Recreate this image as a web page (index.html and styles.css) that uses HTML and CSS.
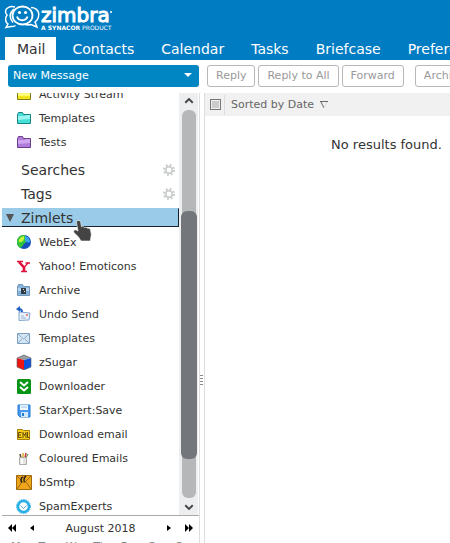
FILE: index.html
```html
<!DOCTYPE html>
<html lang="en">
<head>
    <meta charset="UTF-8">
    <meta name="viewport" content="width=device-width, initial-scale=1.0">
    <title>Zimbra: Mail</title>
    <link rel="stylesheet" href="styles.css">
</head>
<body>
    <header class="header">
        <a class="logo" href="#" aria-label="Zimbra, a Synacor product">
            <svg class="logo-face" width="36" height="25" viewBox="0 0 36 25" fill="none" stroke="#fff">
                <path d="M11 2C6 .5 2 3 1.500 6c-.2 1.500.5 3 1.500 4-2 3-2 7 1 9l-2 3.500 5-1c2 .3 3 0 4.500-1" stroke-width="1.500"/>
                <path d="M27 2.500c4 0 7 2.500 7.500 5 .8 4-1 7.500-3.500 9.500l2 5-6-2.500c-2 .5-4 .5-6 0" stroke-width="1.500"/>
                <path d="M10 4C5 8 5 13 9 17.500" stroke-width="1.500"/>
                <ellipse cx="18.500" cy="10.500" rx="10" ry="9" stroke-width="1.800"/>
                <path d="M13 11.500c1.500 5 9 5 10.500 0" stroke-width="1.800"/>
                <circle cx="15.500" cy="7.500" r="1.600" fill="#fff" stroke="none"/>
                <circle cx="21.500" cy="7.500" r="1.600" fill="#fff" stroke="none"/>
            </svg>
            <span class="logo-text">
                <span class="logo-name">zimbra<span class="logo-mark"></span></span>
                <span class="logo-tag"><b>A SYNACOR</b> PRODUCT</span>
            </span>
        </a>
        <nav class="tabs">
            <a class="tab active" href="#">Mail</a>
            <a class="tab" href="#">Contacts</a>
            <a class="tab" href="#">Calendar</a>
            <a class="tab" href="#">Tasks</a>
            <a class="tab" href="#">Briefcase</a>
            <a class="tab" href="#">Preferences</a>
        </nav>
    </header>

    <div class="toolbar">
        <button class="new-message">New Message <span class="arrow-down"></span></button>
        <div class="actions">
            <button class="button" disabled>Reply</button>
            <button class="button" disabled>Reply to All</button>
            <button class="button" disabled>Forward</button>
            <button class="button second-group" disabled>Archive</button>
        </div>
    </div>

    <div class="main">
        <aside class="sidebar">
            <div class="tree-wrap">
                <div class="tree">
                    <ul class="tree-list scrolled">
                        <li class="item">
                            <svg class="icon" viewBox="0 0 16 16"><path d="M1.500 4.500l1-2h4l1 2h7v9h-13z" fill="#eee51c" stroke="#827c12"/><path d="M2 7h12v3H2z" fill="#fffb76"/></svg>
                            <a href="#">Activity Stream</a>
                        </li>
                        <li class="item">
                            <svg class="icon" viewBox="0 0 16 16"><path d="M1.500 4.500l1-2h4l1 2h7v9h-13z" fill="#46dfd8" stroke="#17827f"/><path d="M2 6h7l1-1h4v4L2 10z" fill="#9bf4ef"/></svg>
                            <a href="#">Templates</a>
                        </li>
                        <li class="item">
                            <svg class="icon" viewBox="0 0 16 16"><path d="M1.500 4.500l1-2h4l1 2h7v9h-13z" fill="#b07bd8" stroke="#6a3d8c"/><path d="M2 6h7l1-1h4v4L2 10z" fill="#cfa5ee"/></svg>
                            <a href="#">Tests</a>
                        </li>
                    </ul>
                    <div class="section first">
                        <a href="#">Searches</a>
                        <button class="gear" aria-label="Searches options">
                            <svg width="12" height="12" viewBox="0 0 12 12" fill="none" stroke="#c6c9c9"><circle cx="6" cy="6" r="3.200" stroke-width="1.500"/><circle cx="6" cy="6" r="5" stroke-width="2" stroke-dasharray="1.900 2.027"/></svg>
                        </button>
                    </div>
                    <div class="section">
                        <a href="#">Tags</a>
                        <button class="gear" aria-label="Tags options">
                            <svg width="12" height="12" viewBox="0 0 12 12" fill="none" stroke="#c6c9c9"><circle cx="6" cy="6" r="3.200" stroke-width="1.500"/><circle cx="6" cy="6" r="5" stroke-width="2" stroke-dasharray="1.900 2.027"/></svg>
                        </button>
                    </div>
                    <div class="section selected">
                        <svg class="expander" width="8" height="8" viewBox="0 0 8 8"><path d="M0 0h8L4 8z" fill="#555"/></svg>
                        <a href="#">Zimlets</a>
                        <svg class="pointer" width="20" height="24" viewBox="0 0 20 24"><path d="M5 1.500c1.300-.3 2.500.5 2.700 1.700L8.500 8c1-.8 2.500-.6 3 .6 1-.7 2.500-.4 3 .7 1.300-.4 2.700.3 3 1.600l.8 4.600-1 6.500H8l-2.500-4L1 13.500c-1-1.700.5-3.200 2.200-2.500L5 12 3.500 4c-.2-1.200.3-2.200 1.500-2.500z" fill="#444" stroke="#fff" stroke-width=".6"/></svg>
                    </div>
                    <ul class="tree-list">
                        <li class="item">
                            <svg class="icon" viewBox="0 0 16 16"><circle cx="8" cy="8" r="7" fill="#1550bd"/><path d="M8 1C0 1-1 11 4 14c3-1 3-4 5-5s1-4 0-8z" fill="#2fc43a"/><path d="M8 2C4 3 2 6 3 8c3 1 6-2 5-6z" fill="#c3f33c"/><path d="M9 2c4 1 5 4 5 6-2 1-5 0-5-2z" fill="#3aa8ef"/></svg>
                            <a href="#">WebEx</a>
                        </li>
                        <li class="item">
                            <svg class="icon" viewBox="0 0 16 16" fill="none" stroke="#e0113a"><path d="M3 4l5 5.500v4" stroke-width="2.600"/><path d="M8 9.500L12 5" stroke-width="1.300"/><path d="M1 3.500h6M9.500 5H14M5 13.500h6" stroke-width="1.300"/></svg>
                            <a href="#">Yahoo! Emoticons</a>
                        </li>
                        <li class="item">
                            <svg class="icon" viewBox="0 0 16 16"><path d="M1.500 4.500l1-2h4l1 2h6v9h-12z" fill="#83b2da" stroke="#7598bb"/><path d="M2 6h11v3H2z" fill="#b6d5ef"/><path d="M5 6h5v6H5z" fill="#333b45"/><path d="M7 7h1v1H7zm1 2h1v1H8z" fill="#dce6ee"/></svg>
                            <a href="#">Archive</a>
                        </li>
                        <li class="item">
                            <svg class="icon" viewBox="0 0 16 16"><path d="M3 6l11 1-1 7-10 .5z" fill="#e9f1fa" stroke="#83a7ce"/><path d="M5 12h5M5 10h3" stroke="#9ab4cf"/><path d="M10 8h2v2h-2z" fill="#e48b84"/><path d="M6 6C6 4 5 3 3 3" fill="none" stroke="#2364c4" stroke-width="2"/><path d="M0 3l4-3v6z" fill="#2364c4"/></svg>
                            <a href="#">Undo Send</a>
                        </li>
                        <li class="item">
                            <svg class="icon" viewBox="0 0 16 16"><path d="M1.500 3.500h12v10h-12z" fill="#d4e6f6" stroke="#7f9fc0"/><path d="M2 4l5.500 5L13 4M2 13l4-4M13 13L9 9" fill="none" stroke="#8eabc8"/></svg>
                            <a href="#">Templates</a>
                        </li>
                        <li class="item">
                            <svg class="icon" viewBox="0 0 16 16"><path d="M1 4l7-3 7 3-7 2z" fill="#989ca3"/><path d="M1 4l7 2v10l-7-3z" fill="#ee1511"/><path d="M15 4L8 6v10l7-3z" fill="#1154dc"/><path d="M1 4l7-3 7 3v9l-7 3-7-3z" fill="none" stroke="#565a65" stroke-width=".6"/></svg>
                            <a href="#">zSugar</a>
                        </li>
                        <li class="item">
                            <svg class="icon" viewBox="0 0 16 16"><rect x="1" y="1" width="14" height="15" rx="1.500" fill="#079516"/><path d="M4 4l4 3.500L12 4M4 9l4 3.500L12 9" fill="none" stroke="#fff" stroke-width="2"/></svg>
                            <a href="#">Downloader</a>
                        </li>
                        <li class="item">
                            <svg class="icon" viewBox="0 0 16 16"><path d="M2 3h12v12H4l-2-2z" fill="#4599f0" stroke="#277bd2"/><path d="M4 3h8v5H4z" fill="#eef6ff"/><path d="M5 10h7v5H5z" fill="#d4e7fb"/><path d="M6 11h2v3H6z" fill="#277bd2"/><path d="M5 5h6" stroke="#9ec6ee"/></svg>
                            <a href="#">StarXpert:Save</a>
                        </li>
                        <li class="item">
                            <svg class="icon" viewBox="0 0 16 16"><path d="M1.500 3.500h5l1 1h6v9h-12z" fill="#f6cd1d" stroke="#a77f0b"/><path d="M5.500 6.500h-3v5h3m-3-2.500h2.500M7 12V6.500l1.500 3 1.500-3V12m1.500-6v5.500h2" fill="none" stroke="#55430d" stroke-width=".9"/></svg>
                            <a href="#">Download email</a>
                        </li>
                        <li class="item">
                            <svg class="icon" viewBox="0 0 16 16"><path d="M5 8L4 4" stroke="#5b4c37" stroke-width="1.500"/><path d="M7 8V3" stroke="#d8aa20" stroke-width="1.500"/><path d="M9 8l1-5" stroke="#cc3029" stroke-width="1.500"/><path d="M10 8l2-4" stroke="#398c3a"/><path d="M3.500 7.500h7v7h-7z" fill="#e3e3e1" stroke="#b0ada8"/><path d="M5 9h2v5H5z" fill="#fff"/></svg>
                            <a href="#">Coloured Emails</a>
                        </li>
                        <li class="item">
                            <svg class="icon" viewBox="0 0 16 16"><path d="M.5 1.500h15v14H.5z" fill="#f1a51b" stroke="#a06b0d"/><path d="M1 2l7 7 7-7M1 15l5-7m9 7l-5-7" fill="none" stroke="#80570f" stroke-width=".8"/><path d="M7 3C4 4 5 8 6 8m4-6C7 4 8 8 9 7" fill="none" stroke="#2b261e" stroke-width="1.600"/></svg>
                            <a href="#">bSmtp</a>
                        </li>
                        <li class="item">
                            <svg class="icon" viewBox="0 0 16 16" fill="none" stroke="#27aee4"><circle cx="7.500" cy="8.500" r="5.500" fill="#fff" stroke-width="2.500"/><circle cx="7.500" cy="8.500" r="7" stroke-width="1" stroke-dasharray="1.500 1"/><path d="M4.500 7.500l3 3 3-3" stroke="#5da9d1"/></svg>
                            <a href="#">SpamExperts</a>
                        </li>
                    </ul>
                </div>
                <div class="scrollbar">
                    <svg class="scroll-arrow" viewBox="0 0 8 8"><path d="M1 5l3-3 3 3" fill="none" stroke="#444" stroke-width="1.500"/></svg>
                    <div class="track"><div class="thumb"></div></div>
                    <svg class="scroll-arrow" viewBox="0 0 8 8"><path d="M1 3l3 3 3-3" fill="none" stroke="#444" stroke-width="1.500"/></svg>
                </div>
            </div>
            <div class="calendar">
                <div class="calendar-head">
                    <button class="cal-button" aria-label="Previous year"><svg width="8" height="8" viewBox="0 0 8 8"><path d="M4 0v8L0 4zM8 0v8L4 4z"/></svg></button>
                    <button class="cal-button" aria-label="Previous month"><svg width="8" height="8" viewBox="0 0 8 8"><path d="M6 1v6L2 4z"/></svg></button>
                    <span class="month">August 2018</span>
                    <button class="cal-button" aria-label="Next month"><svg width="8" height="8" viewBox="0 0 8 8"><path d="M2 1v6l4-3z"/></svg></button>
                    <button class="cal-button" aria-label="Next year"><svg width="8" height="8" viewBox="0 0 8 8"><path d="M0 0v8l4-4zM4 0v8l4-4z"/></svg></button>
                </div>
                <div class="days">
                    <span>Mo</span><span>Tu</span><span>We</span><span>Th</span><span>Fr</span><span>Sa</span><span>Su</span>
                </div>
            </div>
        </aside>
        <div class="sash"><span class="grip"></span></div>
        <main class="list">
            <div class="list-head">
                <input class="check" type="checkbox" aria-label="Select all">
                <button class="sort">Sorted by Date
                    <svg width="8" height="8" viewBox="0 0 8 8" fill="none"><path d="M0 .5h8M1 1l3 6" stroke="#666"/><path d="M4 7l3-6" stroke="#ddd"/></svg>
                </button>
            </div>
            <p class="empty">No results found.</p>
        </main>
    </div>
</body>
</html>
```

FILE: styles.css
```css
* {
    box-sizing: border-box;
}

body {
    display: flex;
    flex-direction: column;
    height: 100vh;
    margin: 0;
    overflow: hidden;
    background: #fff;
    color: #333;
    font-family: "DejaVu Sans", Verdana, sans-serif;
    font-size: 11px;
}

a {
    color: inherit;
    text-decoration: none;
}

button {
    font-family: inherit;
    font-size: 11px;
    cursor: pointer;
}

.header {
    display: flex;
    flex-direction: column;
    justify-content: space-between;
    flex: none;
    height: 60px;
    background: #007cc3;
    color: #fff;
}

.logo {
    display: flex;
    gap: 1px;
    padding: 5px 4px 0;
}

.logo-text {
    display: flex;
    flex-direction: column;
}

.logo-name {
    display: flex;
    font-size: 20px;
    line-height: 20px;
    -webkit-text-stroke: 1px #fff;
}

.logo-mark {
    width: 2px;
    height: 2px;
    margin-top: 6px;
    border-radius: 1px;
    background: #fff;
}

.logo-tag {
    font-size: 6px;
    line-height: 6px;
}

.tabs {
    display: flex;
    padding-left: 5px;
    gap: 4px;
    overflow: hidden;
    white-space: nowrap;
}

.tab {
    height: 23px;
    padding: 0 11px 0 12px;
    font-size: 14px;
    line-height: 24px;
}

.tab.active {
    background: #fff;
    color: #333;
}

.toolbar {
    display: flex;
    flex: none;
    gap: 8px;
    height: 33px;
    padding: 5px 0 6px 8px;
    overflow: hidden;
}

.new-message {
    display: flex;
    align-items: center;
    justify-content: space-between;
    flex: none;
    width: 191px;
    padding: 0 7px 2px 5px;
    border: none;
    border-radius: 3px;
    background: #0087c3;
    color: #fff;
}

.arrow-down {
    border: 4px solid transparent;
    border-top-color: #fff;
    border-bottom: none;
}

.actions {
    display: flex;
    gap: 3px;
}

.button {
    padding: 0 8px 2px;
    border: 1px solid #b8b8b8;
    border-radius: 3px;
    background: #fff;
    color: #999;
    white-space: nowrap;
}

.second-group {
    margin-left: 8px;
}

.main {
    display: flex;
    flex: 1;
    min-height: 0;
}

.sidebar {
    display: flex;
    flex-direction: column;
    flex: none;
    width: 200px;
    padding-left: 2px;
    border-right: 1px solid #ddd;
}

.tree-wrap {
    display: flex;
    flex: 1;
    min-height: 0;
    padding-right: 1px;
}

.tree {
    flex: 1;
    overflow: hidden;
}

.tree-list {
    margin: 0;
    padding: 0;
    list-style: none;
}

.scrolled {
    margin-top: -11px;
}

.item {
    display: flex;
    align-items: center;
    gap: 7px;
    height: 24px;
    padding-left: 14px;
}

.icon {
    width: 16px;
    height: 16px;
}

.section {
    display: flex;
    align-items: center;
    justify-content: space-between;
    height: 24px;
    padding: 0 4px 0 19px;
    font-size: 14px;
}

.section.first {
    margin-top: 4px;
}

.section.selected {
    position: relative;
    justify-content: flex-start;
    gap: 7px;
    height: 19px;
    margin: 2px 0 3px;
    padding-left: 4px;
    border: 1px solid #16232d;
    border-top-color: #9acbe9;
    border-left: none;
    background: #9acbe9;
}

.gear {
    display: flex;
    padding: 0;
    border: none;
    background: none;
}

.pointer {
    position: absolute;
    top: 10px;
    left: 71px;
}

.scrollbar {
    display: flex;
    flex-direction: column;
    align-items: center;
    flex: none;
    width: 19px;
    background: #edeeef;
}

.scroll-arrow {
    flex: none;
    width: 10px;
    height: 17px;
}

.track {
    display: flex;
    flex-direction: column;
    align-items: center;
    flex: 1;
    width: 14px;
    border-radius: 6px;
    background: #b5b7b9;
}

.thumb {
    width: 16px;
    height: 64%;
    margin-top: 101px;
    border-radius: 6px;
    background: #73777b;
}

.calendar {
    flex: none;
    height: 28px;
    border-top: 1px solid #aaa;
    overflow: hidden;
}

.calendar-head {
    display: flex;
    align-items: center;
    gap: 4px;
    height: 24px;
    padding: 0 2px;
}

.cal-button {
    display: flex;
    padding: 4px;
    border: none;
    background: none;
}

.month {
    flex: 1;
    text-align: center;
}

.days {
    display: grid;
    grid-template-columns: repeat(7, 1fr);
    padding-left: 5px;
    color: #888;
}

.days span {
    padding-left: 4px;
}

.sash {
    display: flex;
    align-items: center;
    flex: none;
    width: 5px;
    border-right: 1px solid #ddd;
}

.grip {
    width: 3px;
    height: 10px;
    margin-top: 124px;
    background: repeating-linear-gradient(#888 0 1px, #fff 1px 3px);
}

.list {
    flex: 1;
}

.list-head {
    display: flex;
    align-items: center;
    height: 23px;
    padding-left: 5px;
    background: #f1f1f1;
}

.check {
    appearance: none;
    width: 11px;
    height: 11px;
    margin: 0;
    border: 1px solid #777;
    background: #ccc;
    box-shadow: inset 0 0 0 1px #eee;
}

.sort {
    display: flex;
    align-items: center;
    gap: 6px;
    height: 20px;
    margin-left: 3px;
    padding: 0 6px;
    border: none;
    border-left: 1px solid #ddd;
    background: none;
    color: #666;
    white-space: nowrap;
}

.empty {
    margin: 21px 0;
    padding-left: 118px;
    text-align: center;
    font-size: 13px;
    white-space: nowrap;
}
```
